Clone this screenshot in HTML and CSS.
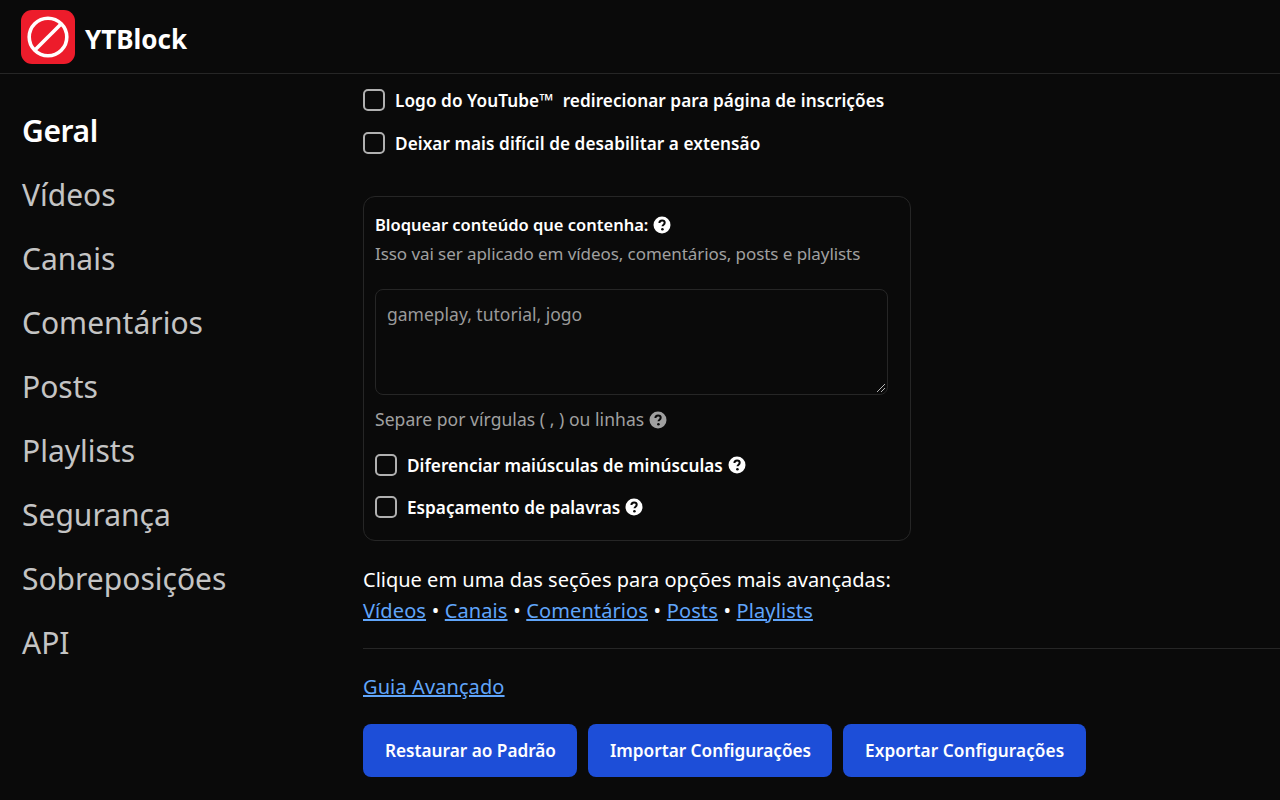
FILE: index.html
```html
<!DOCTYPE html>
<html lang="pt-BR">
<head>
<meta charset="utf-8">
<title>YTBlock</title>
<link rel="stylesheet" href="styles.css">
</head>
<body>
<header class="topbar">
  <svg class="logo" viewBox="0 0 54 54" aria-hidden="true">
    <rect width="54" height="54" rx="11" fill="#ed1c2b"/>
    <circle cx="27" cy="27" r="18.8" fill="none" stroke="#fff" stroke-width="3.6"/>
    <path d="M13.7 40.3 40.3 13.7" stroke="#fff" stroke-width="3.6"/>
  </svg>
  <span class="brand">YTBlock</span>
</header>
<div class="layout">
  <nav class="sidebar">
    <a class="nav-item active">Geral</a>
    <a class="nav-item">Vídeos</a>
    <a class="nav-item">Canais</a>
    <a class="nav-item">Comentários</a>
    <a class="nav-item">Posts</a>
    <a class="nav-item">Playlists</a>
    <a class="nav-item">Segurança</a>
    <a class="nav-item">Sobreposições</a>
    <a class="nav-item">API</a>
  </nav>
  <main class="content">
    <label class="check"><span class="box"></span><span>Logo do YouTube<span class="tm">™</span> redirecionar para página de inscrições</span></label>
    <label class="check"><span class="box"></span><span>Deixar mais difícil de desabilitar a extensão</span></label>
    <section class="card">
      <div class="card-title">Bloquear conteúdo que contenha: <svg class="help" viewBox="0 0 18 18"><use href="#q"/></svg></div>
      <div class="muted card-sub">Isso vai ser aplicado em vídeos, comentários, posts e playlists</div>
      <div class="textarea">gameplay, tutorial, jogo
        <svg class="grip" viewBox="0 0 10 10"><path d="M1 9 9 1M5 9 9 5" stroke="#b5b5b5" stroke-width="1"/></svg>
      </div>
      <div class="muted sep-note">Separe por vírgulas ( , ) ou linhas <svg class="help" viewBox="0 0 18 18"><use href="#q"/></svg></div>
      <label class="check"><span class="box"></span><span>Diferenciar maiúsculas de minúsculas</span><svg class="help" viewBox="0 0 18 18"><use href="#q"/></svg></label>
      <label class="check"><span class="box"></span><span>Espaçamento de palavras</span><svg class="help" viewBox="0 0 18 18"><use href="#q"/></svg></label>
    </section>
    <p class="sections">Clique em uma das seções para opções mais avançadas:<br>
      <span class="link-row"><a class="link">Vídeos</a> • <a class="link">Canais</a> • <a class="link">Comentários</a> • <a class="link">Posts</a> • <a class="link">Playlists</a></span></p>
    <hr class="rule">
    <p class="guide"><a class="link">Guia Avançado</a></p>
    <div class="actions">
      <button class="btn">Restaurar ao Padrão</button>
      <button class="btn">Importar Configurações</button>
      <button class="btn btn-wide">Exportar Configurações</button>
    </div>
  </main>
</div>
<svg class="defs" aria-hidden="true"><defs>
  <g id="q"><circle cx="9" cy="9" r="8.5" fill="currentColor"/><path d="M6.4 7.1c0-1.6 1.2-2.5 2.7-2.5s2.6.9 2.6 2.2c0 1.9-2.2 1.9-2.2 3.5" fill="none" stroke="#0a0a0a" stroke-width="2"/><circle cx="9.4" cy="13.2" r="1.3" fill="#0a0a0a"/></g>
</defs></svg>
</body>
</html>
```
FILE: styles.css
```css
* { box-sizing: border-box; }
html, body { margin: 0; height: 800px; overflow: hidden; }
body { background: #0a0a0a; color: #fff; font-family: "Noto Sans", "Open Sans", sans-serif; }
.defs { display: none; }
.topbar { height: 74px; display: flex; align-items: center; gap: 10px; padding: 1px 21px 0; border-bottom: 1px solid #262626; }
.logo { width: 54px; height: 54px; flex: none; }
.brand { font-size: 26px; font-weight: 700; padding-top: 4px; }
.layout { display: flex; }
.sidebar { width: 363px; flex: none; padding: 24px 0 0 22px; display: flex; flex-direction: column; }
.nav-item { height: 64px; display: flex; align-items: center; font-size: 30px; color: #c4c4c4; }
.nav-item.active { color: #fff; font-weight: 600; letter-spacing: -0.4px; }
.content { flex: 1; padding-top: 15px; }
.check { display: flex; align-items: center; height: 22px; margin-bottom: 21px; font-size: 17.2px; font-weight: 600; letter-spacing: 0.05px; white-space: nowrap; }
.tm { font-size: 18px; line-height: 0; margin-right: 5px; }
.box { width: 22px; height: 22px; flex: none; border: 2px solid #b0b0b0; border-radius: 5px; margin-right: 10px; }
.help { width: 18px; height: 18px; color: #fff; vertical-align: -3px; }
.check .help { margin-left: 5px; }
.card { width: 548px; height: 345px; margin-top: 42px; padding: 17px 11px 0; border: 1px solid #262626; border-radius: 12px; }
.card-title { font-size: 16.5px; font-weight: 600; line-height: 22px; }
.muted { color: #a0a0a0; font-size: 17.5px; letter-spacing: 0.05px; }
.muted .help { color: #a0a0a0; }
.card-sub { font-size: 17px; letter-spacing: -0.07px; line-height: 24px; margin-top: 6px; white-space: nowrap; }
.textarea { position: relative; height: 106px; margin-top: 23px; padding: 12px 11px; width: 513px; border: 1px solid #262626; border-radius: 8px; color: #9a9a9a; font-size: 17.5px; line-height: 24px; }
.grip { position: absolute; right: 1px; bottom: 1px; width: 10px; height: 10px; }
.sep-note { line-height: 24px; margin-top: 12px; margin-bottom: 23px; }
.card .check { margin-bottom: 20px; letter-spacing: 0; }
.sections { margin: 23px 0 0; font-size: 20px; line-height: 31px; white-space: nowrap; }
.link-row { word-spacing: 0.4px; }
.link { color: #60a5fa; text-decoration: underline; letter-spacing: 0.1px; }
.rule { width: 917px; height: 1px; margin: 22px 0 0; border: 0; background: #262626; }
.guide { margin: 22px 0 0; font-size: 20px; line-height: 31px; }
.actions { display: flex; gap: 11px; margin-top: 22px; }
.btn { height: 53px; padding: 0 21px 0 22px; border: 0; border-radius: 8px; background: #1d4ed8; color: #fff; font: 600 17.2px "Noto Sans", sans-serif; }
.btn-wide { padding: 0 22px; letter-spacing: 0.08px; }
```
